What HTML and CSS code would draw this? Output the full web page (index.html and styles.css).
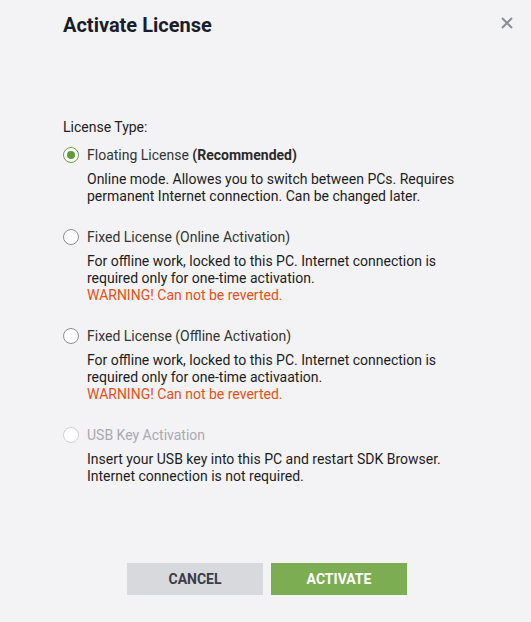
FILE: index.html
```html
<!DOCTYPE html>
<html>
<head>
<meta charset="utf-8">
<link rel="stylesheet" href="styles.css">
</head>
<body>
<div class="dialog">
  <div class="header">
    <h1 class="title">Activate License</h1>
    <button class="close" aria-label="Close">
      <svg width="12" height="12" viewBox="0 0 12 12"><path d="M1 1L11 11M11 1L1 11" stroke="#8b8e95" stroke-width="2" fill="none"/></svg>
    </button>
  </div>
  <div class="body">
    <div class="type-label">License Type:</div>
    <div class="options">
      <div class="option">
        <div class="opt-row"><span class="radio checked"></span><span class="opt-label">Floating License <b>(Recommended)</b></span></div>
        <div class="desc">Online mode. Allowes you to switch between PCs. Requires permanent Internet connection. Can be changed later.</div>
      </div>
      <div class="option">
        <div class="opt-row"><span class="radio"></span><span class="opt-label">Fixed License (Online Activation)</span></div>
        <div class="desc">For offline work, locked to this PC. Internet connection is required only for one-time activation.<br><span class="warn">WARNING! Can not be reverted.</span></div>
      </div>
      <div class="option">
        <div class="opt-row"><span class="radio"></span><span class="opt-label">Fixed License (Offline Activation)</span></div>
        <div class="desc">For offline work, locked to this PC. Internet connection is required only for one-time activaation.<br><span class="warn">WARNING! Can not be reverted.</span></div>
      </div>
      <div class="option disabled">
        <div class="opt-row"><span class="radio"></span><span class="opt-label">USB Key Activation</span></div>
        <div class="desc">Insert your USB key into this PC and restart SDK Browser. Internet connection is not required.</div>
      </div>
    </div>
  </div>
  <div class="footer">
    <button class="btn cancel">CANCEL</button>
    <button class="btn activate">ACTIVATE</button>
  </div>
</div>
</body>
</html>
```

FILE: styles.css
```css
html, body {
  margin: 0;
  padding: 0;
  background: #f3f3f5;
}
body {
  font-family: Roboto, "Liberation Sans", sans-serif;
  color: #1e1f24;
}
.dialog {
  height: 622px;
  display: flex;
  flex-direction: column;
  box-sizing: border-box;
}
.header {
  display: flex;
  justify-content: space-between;
  align-items: flex-start;
  padding: 13px 18px 0 63px;
}
.title {
  margin: 0;
  font-size: 20px;
  line-height: 24px;
  font-weight: 700;
  color: #1a1e2c;
}
.close {
  border: 0;
  background: none;
  padding: 0;
  margin-top: 4px;
  width: 12px;
  height: 12px;
  display: flex;
}
.body {
  padding: 0 63px;
  font-size: 14px;
  flex: 1;
}
.type-label {
  margin-top: 82px;
  line-height: 17px;
  color: #222;
}
.options {
  margin-top: 10px;
  display: flex;
  flex-direction: column;
  gap: 23px;
}
.opt-row {
  display: flex;
  align-items: center;
  gap: 8px;
  line-height: 18px;
  height: 18px;
}
.opt-label {
  color: #333;
}
.opt-label b {
  font-weight: 700;
  color: #2a2a2a;
}
.radio {
  width: 14px;
  height: 14px;
  border: 1px solid #8e8e94;
  border-radius: 50%;
  background: #fff;
  box-sizing: content-box;
  display: flex;
  align-items: center;
  justify-content: center;
  flex: none;
}
.radio.checked {
  border-color: #6aa046;
}
.radio.checked::after {
  content: "";
  width: 8px;
  height: 8px;
  border-radius: 50%;
  background: #5e9a3a;
}
.disabled .radio {
  border-color: #cfcfd4;
}
.disabled .opt-label {
  color: #a9a9ae;
}
.desc {
  margin: 7px 0 0 24px;
  line-height: 17px;
  color: #1c1c1f;
}
.warn {
  color: #e84f16;
}
.footer {
  display: flex;
  justify-content: center;
  gap: 8px;
  padding: 0 0 27px 3px;
}
.btn {
  width: 136px;
  height: 32px;
  border: 0;
  font-family: Roboto, "Liberation Sans", sans-serif;
  font-size: 14px;
  font-weight: 700;
  cursor: pointer;
}
.cancel {
  background: #d8d9dc;
  color: #3a3c48;
}
.activate {
  background: #7cad52;
  color: #fff;
}
```
